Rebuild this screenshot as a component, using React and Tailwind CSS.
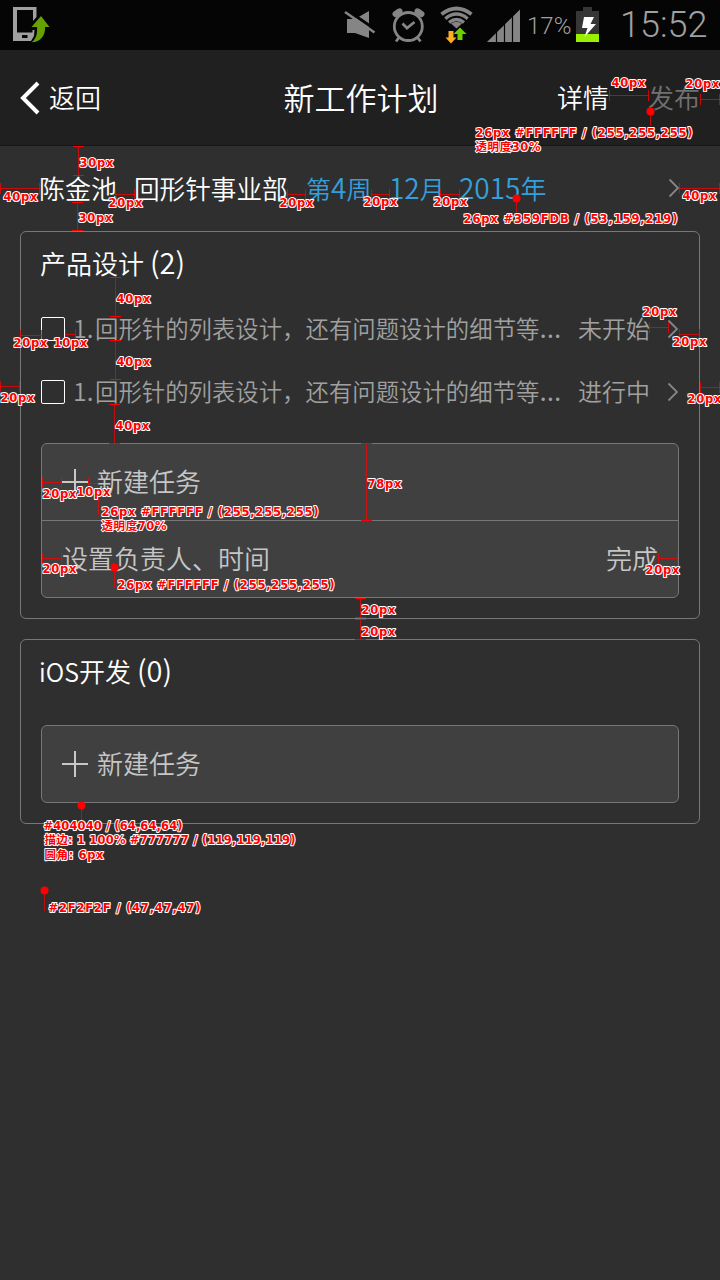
const RED = "#ff0000";

// [x, y (vertical centre), text, width]
const LABELS = [
  [611, 83, "40px", 34], [685, 84, "20px", 34],
  [475, 133, "26px #FFFFFF / (255,255,255)", 217], [475, 147, "透明度30%", 65],
  [79, 163, "30px", 34], [3, 197, "40px", 34], [108, 203, "20px", 34], [78, 218, "30px", 34],
  [279, 203, "20px", 34], [363, 202, "20px", 34], [433, 202, "20px", 34], [682, 196, "40px", 34],
  [463, 219, "26px #359FDB / (53,159,219)", 214],
  [116, 299, "40px", 34], [642, 312, "20px", 34], [13, 343, "20px", 34], [53, 343, "10px", 34], [672, 342, "20px", 34],
  [116, 362, "40px", 34], [0, 398, "20px", 34], [687, 399, "20px", 34], [115, 426, "40px", 34],
  [42, 494, "20px", 34], [76, 492, "10px", 34], [367, 484, "78px", 34],
  [101, 512, "26px #FFFFFF / (255,255,255)", 217], [101, 526, "透明度70%", 65],
  [42, 569, "20px", 34], [117, 585, "26px #FFFFFF / (255,255,255)", 217], [645, 570, "20px", 34],
  [361, 610, "20px", 34], [361, 632, "20px", 34],
  [43, 826, "#404040 / (64,64,64)", 139], [44, 840, "描边: 1 100% #777777 / (119,119,119)", 251], [44, 855, "圆角: 6px", 59],
  [48, 908, "#2F2F2F / (47,47,47)", 152],
];

// Horizontal spans [x1, x2, y] and vertical spans [x, y1, y2]
const H = [
  [609, 648, 95], [700, 719, 99], [0, 39, 188], [115, 134, 194], [287, 305, 194], [371, 389, 194],
  [440, 459, 194], [679, 719, 188], [20, 41, 335], [65, 75, 334], [649, 668, 327], [679, 699, 334],
  [0, 19, 386], [700, 719, 387], [42, 61, 482], [88, 97, 483], [42, 61, 558], [658, 677, 558],
];
const V = [
  [78, 146, 175], [77, 202, 230], [115, 277, 316], [115, 340, 379], [114, 404, 443], [366, 443, 520], [360, 598, 617], [360, 619, 639],
];
// Pins [x, y, stem end]
const PINS = [[650, 111, 126], [516, 198, 212], [98, 493, 515], [114, 567, 588], [81, 805, 820], [44, 890, 911]];

function Spec() {
  return (
    <div className="pointer-events-none absolute inset-0 overflow-hidden">
      <svg width="720" height="1280" className="absolute inset-0" stroke={RED} fill="none">
        {H.map(([a, b, y]) => (
          <g key={`${a}-${y}`}>
            <path strokeOpacity=".75" d={`M${a} ${y + 0.5}H${b + 1}`} />
            <path strokeOpacity=".75" d={`M${a + 0.5} ${y - 5}v11M${b + 0.5} ${y - 5}v11`} />
          </g>
        ))}
        {V.map(([x, a, b]) => (
          <g key={`${x}-${a}`}>
            <path strokeOpacity=".7" d={`M${x + 0.5} ${a}V${b + 1}`} />
            <path d={`M${x - 5} ${a + 0.5}h11M${x - 5} ${b + 0.5}h11`} />
          </g>
        ))}
        {PINS.map(([x, y, e]) => (
          <g key={`${x}-${y}`}>
            <path strokeOpacity=".7" d={`M${x + 0.5} ${y}V${e}`} />
            <circle cx={x + 0.5} cy={y + 0.5} r="4" fill={RED} stroke="none" />
          </g>
        ))}
        <g
          fill={RED} stroke="#fff" strokeWidth="2" strokeLinejoin="round"
          className="[paint-order:stroke] font-['DejaVu_Sans','Noto_Sans_CJK_SC',sans-serif] text-[11.5px] font-bold"
        >
          {LABELS.map(([x, y, t, w]) => (
            <text key={`${x}-${y}`} x={x + 0.5} y={y + 4} textLength={w} lengthAdjust="spacing">{t}</text>
          ))}
        </g>
      </svg>
    </div>
  );
}

function Chevron() {
  return (
    <svg width="12" height="20" viewBox="0 0 12 20" fill="none" stroke="#858585" strokeWidth="1.8" className="shrink-0">
      <path d="M1.5 1.5L10 10L1.5 18.5" />
    </svg>
  );
}

function StatusBar() {
  return (
    <div className="flex h-[50px] items-center bg-[#050505] font-['Roboto',sans-serif] text-[#a0a0a0]">
      <svg width="50" height="50" viewBox="0 0 50 50">
        <path fill="#a0a0a0" fillRule="evenodd" d="M13 7H36.500V17L33 21V10H17V32.500H32.500V30H34.500L34 36L31 41H13ZM22 35v3h5.500v-3z" />
        <path fill="#67a003" d="M41 16L49.500 27H45C45.500 35 41 42 31.500 42.300C36.500 39 37.500 33 37 27H31.500Z" />
      </svg>
      <svg width="192" height="50" viewBox="338 0 192 50" className="ml-[288px] shrink-0">
        <path fill="#858585" d="M347 19h8l14-8v27l-14-5h-8z" />
        <path stroke="#050505" strokeWidth="3" d="M346 9.500L376 30" />
        <path stroke="#858585" strokeWidth="2.6" d="M345 12L374.500 32.500" />
        <g fill="none" stroke="#858585">
          <circle cx="408.300" cy="26.500" r="14" strokeWidth="2.8" />
          <path strokeWidth="2.8" d="M402.500 23.500l4.500 4.500 7.500-6M399 37.500l-3 4M417.500 37.500l3 4" />
          <path strokeWidth="6" strokeLinecap="round" d="M395.500 14l4-2.700M417.500 11.300l4 2.700" />
          <path strokeWidth="3.800" d="M441.500 14.200Q456.500 2.800 471.500 14.200" />
          <path strokeWidth="3.400" d="M445.300 18.700Q456.500 9.500 467.700 18.700M449 22.500Q456.500 16.500 464 22.500" />
        </g>
        <path fill="#858585" d="M451 23.500Q456.500 20 462 23.500L456.500 28.500Z" />
        <path fill="#ffae20" d="M448.500 31h5v6.500h3L451 43.500l-5.500-6h3z" />
        <path fill="#70cf00" d="M460 27.500l6.500 6.500h-4v6h-5v-6h-4z" />
        <path fill="#858585" d="M487 42L520 9.500V42Z" />
        <path stroke="#050505" strokeWidth="1.200" d="M496.500 25V42M504.500 20V42M512.500 12V42" />
      </svg>
      <span className="-ml-[3px] w-[46px] pt-px text-[24px] leading-none">17%</span>
      <svg width="24" height="50" viewBox="576 0 24 50" className="ml-[3px] shrink-0">
        <path fill="#363636" d="M583 7h9v4h7v23h-23V11h7z" />
        <path fill="#99f000" d="M576 34h23v8h-23z" />
        <path fill="#fff" d="M584 17h10l-3.500 7H596L584.500 37l3-9H582z" />
      </svg>
      <span className="ml-[20px] text-[36px] leading-none font-[350]">15:52</span>
    </div>
  );
}

function Plus() {
  return (
    <svg width="26" height="26" viewBox="0 0 26 26" stroke="#c8c8c8" strokeWidth="2">
      <path d="M13 0V26M0 13H26" />
    </svg>
  );
}

function NewTask() {
  return (
    <div className="flex h-[76px] items-center gap-[9px] px-5 text-[#c6c6c6]">
      <Plus />
      <span className="pb-[2px]">新建任务</span>
    </div>
  );
}

function Task({ state }) {
  return (
    <div className="flex h-[63px] items-center text-[#a0a0a0]">
      <span className="relative -top-px size-6 shrink-0 rounded-[2px] border border-white" />
      <span className="ml-2 flex w-[505px] items-baseline pb-[5px] text-[23.4px] whitespace-nowrap">
        <span className="w-[22px] text-[25px]">1.</span>
        <span>回形针的列表设计，还有问题设计的细节等</span>
        <span className="text-[27px]">...</span>
      </span>
      <span className="w-[72px] pb-[4px] text-[24px] whitespace-nowrap">{state}</span>
      <span className="ml-auto flex pb-[2px]"><Chevron /></span>
    </div>
  );
}

export default function App() {
  return (
    <div className="relative h-[1280px] w-[720px] overflow-hidden bg-[#2f2f2f] font-['Noto_Sans_CJK_SC',sans-serif] text-[26px] leading-none font-[350] text-white">
      <StatusBar />
      <header className="grid h-24 grid-cols-3 items-center border-b border-[#161616] bg-[#202020] px-5">
        <div className="flex items-center gap-[9px]">
          <svg width="20" height="34" viewBox="0 0 20 34" fill="none" stroke="#fff" strokeWidth="4">
            <path d="M18 2L3 17L18 32" />
          </svg>
          <span className="pb-px">返回</span>
        </div>
        <h1 className="pb-[2px] pl-[2px] text-center text-[31px]">新工作计划</h1>
        <div className="flex justify-end gap-10 pb-px">
          <span className="relative left-px">详情</span>
          <span className="text-[#717171]">发布</span>
        </div>
      </header>

      <div className="flex h-[85px] items-center pr-10 pl-[39px]">
        <div className="flex items-baseline pb-[3px]">
          <span className="w-[95px]">陈金池</span>
          <span className="w-[172px] text-[25.6px]">回形针事业部</span>
          <div className="flex items-baseline text-[#359fdb]">
            <span className="w-[83px] text-[25px]">第<span className="text-[28px]">4</span>周</span>
            <span className="w-[70px] text-[25px]"><span className="text-[28px]">12</span>月</span>
            <span><span className="text-[28px]">2015</span>年</span>
          </div>
        </div>
        <span className="ml-auto flex pb-px"><Chevron /></span>
      </div>

      <main className="flex flex-col gap-5 px-5">
        <section className="rounded-[6px] border border-[#777] px-5 pb-5">
          <h2 className="-ml-px flex h-[66px] items-baseline gap-[6px] pt-[15px]">
            <span>产品设计</span>
            <span className="text-[29px]">(2)</span>
          </h2>
          <Task state="未开始" />
          <Task state="进行中" />
          <div className="mt-[19px] rounded-[6px] border border-[#777] bg-[#404040]">
            <NewTask />
            <div className="flex h-[77px] items-center justify-between border-t border-[#777] px-5 pb-[2px] text-[#c6c6c6]">
              <span>设置负责人、时间</span>
              <span>完成</span>
            </div>
          </div>
        </section>
        <section className="rounded-[6px] border border-[#777] px-5 pb-5">
          <h2 className="-ml-[2px] flex h-[85px] items-baseline gap-[6px] pt-[15px]">
            <span><span className="text-[25px]">iOS</span>开发</span>
            <span className="text-[29px]">(0)</span>
          </h2>
          <div className="rounded-[6px] border border-[#777] bg-[#404040]">
            <NewTask />
          </div>
        </section>
      </main>
      <Spec />
    </div>
  );
}
